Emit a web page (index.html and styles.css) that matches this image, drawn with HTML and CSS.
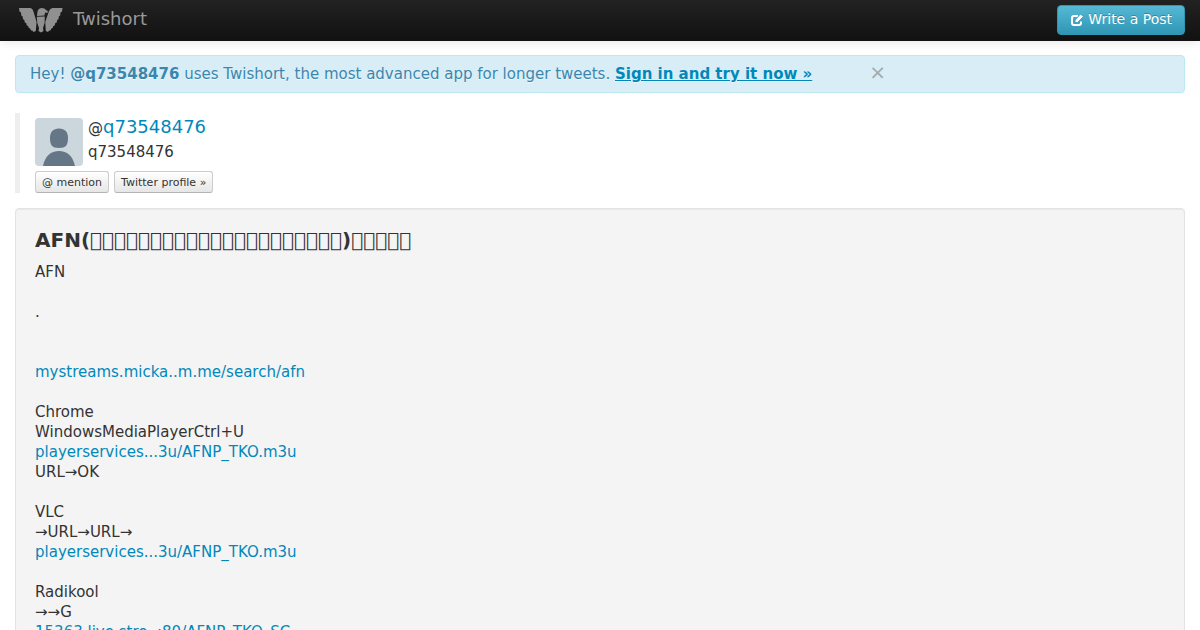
FILE: index.html
```html
<!DOCTYPE html>
<html lang="en">
<head>
<meta charset="utf-8">
<meta name="viewport" content="width=device-width, initial-scale=1">
<title>Twishort</title>
<link rel="stylesheet" href="styles.css">
</head>
<body>
<header class="navbar">
  <a class="brand" href="#">
    <svg class="brand-logo" viewBox="0 0 44 26" aria-hidden="true">
      <path d="M0 1H11.500Q13.500 1.500 14.300 4L17.600 15L16.800 24L14.500 25L13.300 23.500L12 23.500L11.200 21.500L9.800 21L9.200 19L7.800 18.500L7.200 16L5.800 15.500L5.300 13L3.900 12L3.700 9.500L2.300 8.500L2 5.500L0.500 4.500Z"/>
      <path d="M43.500 1H33.500Q31 1.500 30 4L26.200 15L26.800 24L29 25L30.200 23.500L31.500 23.500L32.300 21.500L33.700 21L34.300 19L35.700 18.500L36.300 16L37.700 15.500L38.200 13L39.600 12L39.800 9.500L41.200 8.500L41.500 5.500L43 4.500Z"/>
      <path d="M18.300 6Q18.500 1.500 22.500 1Q26 1 27 3L28.800 4L28.500 6L26.500 5.500Q25.500 6 25.500 8.500L18 9Z"/>
      <path d="M17.800 9.800L25.800 9.500L25.600 16L24 21L24.500 24L22 25.500L19.500 24L20 21L18.300 16Z"/>
    </svg>
    <span>Twishort</span>
  </a>
  <button class="btn-primary" type="button">
    <svg class="edit-icon" viewBox="0 0 14 14" aria-hidden="true">
      <path class="edit-box" d="M8 3H4Q2 3 2 5V10Q2 12 4 12H9Q11 12 11 10V8.500"/>
      <path class="edit-pen" d="M5 9.500V7L10.500 1L13.500 3.500L7.500 9.500Z"/>
    </svg>
    <span>Write a Post</span>
  </button>
</header>
<main class="container">
  <div class="alert">
    <p class="alert-text">Hey! <strong>@q73548476</strong> uses Twishort, the most advanced app for longer tweets. <a class="alert-link" href="#">Sign in and try it now »</a></p>
    <button class="close" type="button" aria-label="Close">×</button>
  </div>
  <section class="author">
    <div class="author-info">
      <svg class="avatar" viewBox="0 0 48 48" aria-hidden="true">
        <rect width="48" height="48" fill="#ccd6dd"/>
        <path d="M24 10.500C30 10.500 33 14 33 20C33 27 31 30 24 30C17 30 15 27 15 20C15 14 18 10.500 24 10.500ZM8 48C10 38 16 33 24 33C32 33 38 38 40 48Z" fill="#657786"/>
      </svg>
      <div class="author-names">
        <div class="author-handle">@<a class="handle-link" href="#">q73548476</a></div>
        <div class="author-name">q73548476</div>
      </div>
    </div>
    <div class="author-actions">
      <a class="btn-mini" href="#">@ mention</a>
      <a class="btn-mini" href="#">Twitter profile »</a>
    </div>
  </section>
  <article class="well">
    <h1 class="title">AFN(&#xE000;&#xE000;&#xE000;&#xE000;&#xE000;&#xE000;&#xE000;&#xE000;&#xE000;&#xE000;&#xE000;&#xE000;&#xE000;&#xE000;&#xE000;&#xE000;&#xE000;&#xE000;&#xE000;&#xE000;&#xE000;)&#xE000;&#xE000;&#xE000;&#xE000;&#xE000;</h1>
    <div class="post">AFN

.


<a href="#">mystreams.micka..m.me/search/afn</a>

Chrome
WindowsMediaPlayerCtrl+U
<a href="#">playerservices...3u/AFNP_TKO.m3u</a>
URL→OK

VLC
→URL→URL→
<a href="#">playerservices...3u/AFNP_TKO.m3u</a>

Radikool
→→G
<a href="#">15363.live.stre..:80/AFNP_TKO_SC</a></div>
  </article>
</main>
</body>
</html>
```
FILE: styles.css
```css
* { box-sizing: border-box; }

body {
  margin: 0;
  background: #fff;
  color: #333;
  font: 15px/20px "DejaVu Sans", sans-serif;
}

a { color: #0088bb; text-decoration: none; }

.navbar {
  display: flex;
  justify-content: space-between;
  align-items: center;
  height: 41px;
  padding: 0 15px 1px 19px;
  background: linear-gradient(#222, #111);
  box-shadow: 0 1px 10px rgba(0, 0, 0, 0.1);
}

.brand {
  display: flex;
  align-items: center;
  gap: 10px;
  color: #999;
  font-size: 18px;
}

.brand span { padding-bottom: 2px; }

.brand-logo { width: 44px; height: 26px; fill: #909090; }

.btn-primary {
  display: flex;
  align-items: center;
  gap: 4px;
  height: 30px;
  padding: 0 12px;
  border: 1px solid #2f96b4;
  border-radius: 4px;
  background: linear-gradient(#55b9d5, #2f96b4);
  color: #fff;
  font: 14px/20px "DejaVu Sans", sans-serif;
  text-shadow: 0 -1px 0 rgba(0, 0, 0, 0.25);
}

.btn-primary span { padding-bottom: 2px; }

.edit-icon { width: 14px; height: 14px; }
.edit-box { fill: none; stroke: #fff; stroke-width: 2; }
.edit-pen { fill: #fff; stroke: #3aa3c1; stroke-width: 1; }

.container { padding: 14px 15px; }

.alert {
  display: flex;
  gap: 57px;
  padding: 8px 14px;
  border: 1px solid #bce8f1;
  border-radius: 4px;
  background: #d9edf7;
  color: #3a87ad;
  text-shadow: 0 1px 0 rgba(255, 255, 255, 0.5);
}

.alert-text { margin: 0; }
.alert-link { font-weight: bold; text-decoration: underline; }

.close {
  align-self: flex-start;
  padding: 0;
  border: 0;
  background: none;
  color: #9fabb0;
  font: 20px/16px "DejaVu Sans", sans-serif;
}

.author {
  margin: 20px 0 15px;
  padding: 5px 0 0 15px;
  border-left: 5px solid #eee;
}

.author-info { display: flex; gap: 5px; }
.avatar { width: 48px; height: 48px; border-radius: 4px; }
.author-handle { line-height: 18px; }
.handle-link { font-size: 18px; }
.author-name { margin-top: 5px; }

.author-actions { display: flex; gap: 5px; margin-top: 5px; }

.btn-mini {
  padding: 1px 6px 0;
  border: 1px solid #ccc;
  border-bottom-color: #b3b3b3;
  border-radius: 3px;
  background: linear-gradient(#fff, #e6e6e6);
  color: #333;
  font-size: 11px;
  line-height: 19px;
}

.well {
  padding: 19px;
  border: 1px solid #e3e3e3;
  border-radius: 4px;
  background: #f4f4f4;
  box-shadow: inset 0 1px 1px rgba(0, 0, 0, 0.05);
}

.title { margin: 0 0 10px; font-size: 20px; line-height: 24px; }
.post { white-space: pre-line; }
```
